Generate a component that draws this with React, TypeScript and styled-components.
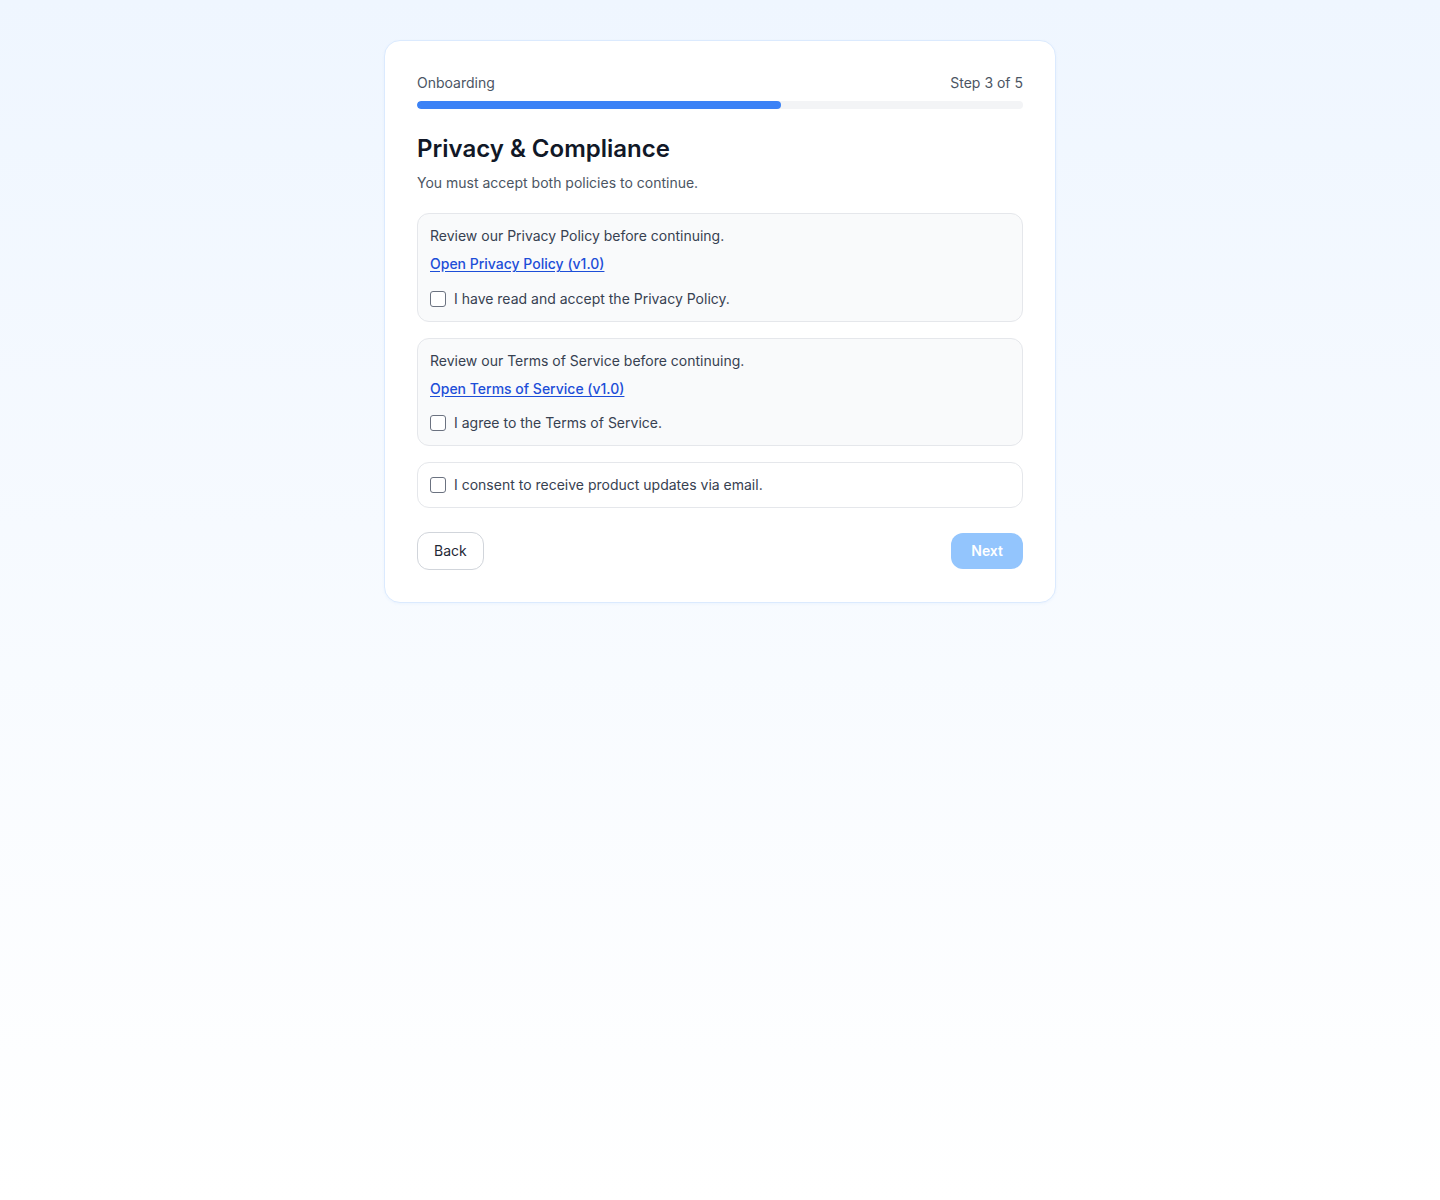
import React, { useState } from 'react';
import styled, { createGlobalStyle } from 'styled-components';

const GlobalStyle = createGlobalStyle`
  * { box-sizing: border-box; }
  body {
    margin: 0;
    font-family: Inter, "Noto Sans", "Liberation Sans", sans-serif;
    color: #374151;
  }
`;

const Page = styled.div`
  min-height: 1200px;
  background: linear-gradient(to bottom, #eff6ff, #ffffff);
  padding-top: 40px;
`;

const Card = styled.div`
  width: 672px;
  margin: 0 auto;
  background: #ffffff;
  border: 1px solid #dbeafe;
  border-radius: 16px;
  box-shadow: 0 1px 3px rgba(59, 130, 246, 0.06);
  padding: 32px;
`;

const HeaderRow = styled.div`
  display: flex;
  justify-content: space-between;
  font-size: 14px;
  line-height: 20px;
  color: #4b5563;
`;

const Track = styled.div`
  margin-top: 8px;
  height: 8px;
  border-radius: 999px;
  background: #f3f4f6;
  overflow: hidden;
`;

const Fill = styled.div`
  height: 100%;
  border-radius: 999px;
  background: #3b82f6;
`;

const Title = styled.h1`
  margin: 24px 0 0;
  font-size: 24px;
  line-height: 32px;
  font-weight: 600;
  color: #111827;
`;

const Subtitle = styled.p`
  margin: 8px 0 0;
  font-size: 14px;
  line-height: 20px;
  color: #4b5563;
`;

const Sections = styled.div`
  margin-top: 20px;
  display: flex;
  flex-direction: column;
  gap: 16px;
`;

const Box = styled.div<{ $muted?: boolean }>`
  border: 1px solid #e5e7eb;
  border-radius: 12px;
  padding: 12px;
  background: ${p => (p.$muted ? '#f9fafb' : '#ffffff')};
  display: flex;
  flex-direction: column;
  font-size: 14px;
  line-height: 20px;
`;

const BoxText = styled.p`
  margin: 0;
  color: #374151;
`;

const PolicyLink = styled.a`
  margin-top: 8px;
  color: #1d4ed8;
  font-weight: 500;
  text-decoration: underline;
  text-underline-offset: 2px;
  width: fit-content;
`;

const CheckRow = styled.label<{ $space?: number }>`
  display: flex;
  align-items: center;
  gap: 8px;
  margin-top: ${p => p.$space ?? 0}px;
  color: #374151;
  cursor: pointer;
`;

const Check = styled.input`
  appearance: none;
  margin: 0;
  width: 16px;
  height: 16px;
  border: 1px solid #6b7280;
  border-radius: 3px;
  background: #ffffff;
  flex-shrink: 0;
  &:checked {
    background: #3b82f6;
    border-color: #3b82f6;
  }
`;

const Actions = styled.div`
  margin-top: 24px;
  display: flex;
  justify-content: space-between;
  align-items: center;
`;

const BackButton = styled.button`
  font-family: inherit;
  font-size: 14px;
  line-height: 20px;
  padding: 8px 16px;
  border: 1px solid #d1d5db;
  border-radius: 12px;
  background: #ffffff;
  color: #1f2937;
  cursor: pointer;
`;

const NextButton = styled.button`
  font-family: inherit;
  font-size: 14px;
  line-height: 20px;
  font-weight: 600;
  padding: 8px 20px;
  border: none;
  border-radius: 12px;
  background: #2563eb;
  color: #ffffff;
  cursor: pointer;
  &:disabled {
    background: #93c5fd;
    cursor: not-allowed;
  }
`;

export default function App() {
  const [privacy, setPrivacy] = useState(false);
  const [terms, setTerms] = useState(false);
  const [updates, setUpdates] = useState(false);
  const step = 3;
  const total = 5;

  return (
    <Page>
      <GlobalStyle />
      <Card>
        <HeaderRow>
          <span>Onboarding</span>
          <span>Step {step} of {total}</span>
        </HeaderRow>
        <Track>
          <Fill style={{ width: `${(step / total) * 100}%` }} />
        </Track>
        <Title>Privacy &amp; Compliance</Title>
        <Subtitle>You must accept both policies to continue.</Subtitle>

        <Sections>
          <Box $muted>
            <BoxText>Review our Privacy Policy before continuing.</BoxText>
            <PolicyLink href="#">Open Privacy Policy (v1.0)</PolicyLink>
            <CheckRow $space={15}>
              <Check type="checkbox" checked={privacy} onChange={e => setPrivacy(e.target.checked)} />
              I have read and accept the Privacy Policy.
            </CheckRow>
          </Box>
          <Box $muted>
            <BoxText>Review our Terms of Service before continuing.</BoxText>
            <PolicyLink href="#">Open Terms of Service (v1.0)</PolicyLink>
            <CheckRow $space={14}>
              <Check type="checkbox" checked={terms} onChange={e => setTerms(e.target.checked)} />
              I agree to the Terms of Service.
            </CheckRow>
          </Box>
          <Box>
            <CheckRow>
              <Check type="checkbox" checked={updates} onChange={e => setUpdates(e.target.checked)} />
              I consent to receive product updates via email.
            </CheckRow>
          </Box>
        </Sections>

        <Actions>
          <BackButton>Back</BackButton>
          <NextButton disabled={!(privacy && terms)}>Next</NextButton>
        </Actions>
      </Card>
    </Page>
  );
}
